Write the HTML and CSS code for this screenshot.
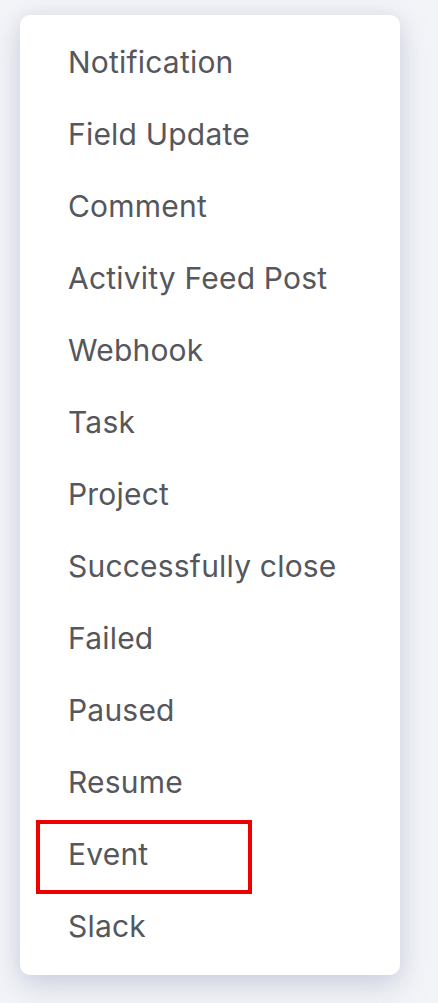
FILE: index.html
```html
<!DOCTYPE html>
<html>
<head>
<meta charset="utf-8">
<link rel="stylesheet" href="styles.css">
</head>
<body>
<div class="page">
  <ul class="menu">
    <li class="item">Notification</li>
    <li class="item">Field Update</li>
    <li class="item">Comment</li>
    <li class="item">Activity Feed Post</li>
    <li class="item">Webhook</li>
    <li class="item">Task</li>
    <li class="item">Project</li>
    <li class="item">Successfully close</li>
    <li class="item">Failed</li>
    <li class="item">Paused</li>
    <li class="item">Resume</li>
    <li class="item item-highlight">Event</li>
    <li class="item">Slack</li>
  </ul>
</div>
</body>
</html>
```

FILE: styles.css
```css
html, body {
  margin: 0;
  padding: 0;
  background: #f3f4f8;
}
.page {
  width: 438px;
  height: 1003px;
  padding: 15px 0 0 20px;
  box-sizing: border-box;
  background: #f3f4f8;
}
.menu {
  list-style: none;
  margin: 0;
  width: 380px;
  height: 960px;
  box-sizing: border-box;
  padding: 11px 0 13px 0;
  background: #ffffff;
  border-radius: 10px;
  box-shadow: 0 12px 30px rgba(150, 158, 185, 0.35), 0 0 18px rgba(170, 176, 200, 0.2);
  display: flex;
  flex-direction: column;
}
.item {
  position: relative;
  height: 72px;
  display: flex;
  align-items: center;
  padding-left: 48px;
  font-family: Inter, "Noto Sans", sans-serif;
  font-size: 30px;
  letter-spacing: 0.2px;
  color: #56575c;
}
.item-highlight::after {
  content: "";
  position: absolute;
  left: 16px;
  top: 2px;
  width: 216px;
  height: 74px;
  box-sizing: border-box;
  border: 4px solid #ee0000;
}
```
